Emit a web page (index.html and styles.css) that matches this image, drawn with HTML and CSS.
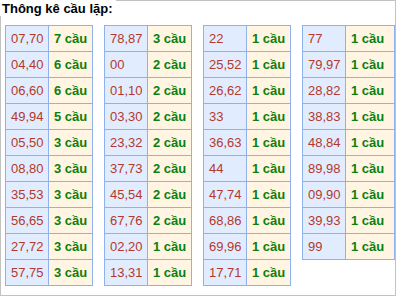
FILE: index.html
```html
<!DOCTYPE html>
<html>
<head>
<meta charset="utf-8">
<link rel="stylesheet" href="styles.css">
</head>
<body>
<div class="box">
  <div class="title"><span class="title-text">Thông kê cầu lặp:</span></div>
  <div class="tables">
    <div class="tbl">
      <div class="n">07,70</div><div class="c">7 cầu</div>
      <div class="n">04,40</div><div class="c">6 cầu</div>
      <div class="n">06,60</div><div class="c">6 cầu</div>
      <div class="n">49,94</div><div class="c">5 cầu</div>
      <div class="n">05,50</div><div class="c">3 cầu</div>
      <div class="n">08,80</div><div class="c">3 cầu</div>
      <div class="n">35,53</div><div class="c">3 cầu</div>
      <div class="n">56,65</div><div class="c">3 cầu</div>
      <div class="n">27,72</div><div class="c">3 cầu</div>
      <div class="n">57,75</div><div class="c">3 cầu</div>
    </div>
    <div class="tbl">
      <div class="n">78,87</div><div class="c">3 cầu</div>
      <div class="n">00</div><div class="c">2 cầu</div>
      <div class="n">01,10</div><div class="c">2 cầu</div>
      <div class="n">03,30</div><div class="c">2 cầu</div>
      <div class="n">23,32</div><div class="c">2 cầu</div>
      <div class="n">37,73</div><div class="c">2 cầu</div>
      <div class="n">45,54</div><div class="c">2 cầu</div>
      <div class="n">67,76</div><div class="c">2 cầu</div>
      <div class="n">02,20</div><div class="c">1 cầu</div>
      <div class="n">13,31</div><div class="c">1 cầu</div>
    </div>
    <div class="tbl">
      <div class="n">22</div><div class="c">1 cầu</div>
      <div class="n">25,52</div><div class="c">1 cầu</div>
      <div class="n">26,62</div><div class="c">1 cầu</div>
      <div class="n">33</div><div class="c">1 cầu</div>
      <div class="n">36,63</div><div class="c">1 cầu</div>
      <div class="n">44</div><div class="c">1 cầu</div>
      <div class="n">47,74</div><div class="c">1 cầu</div>
      <div class="n">68,86</div><div class="c">1 cầu</div>
      <div class="n">69,96</div><div class="c">1 cầu</div>
      <div class="n">17,71</div><div class="c">1 cầu</div>
    </div>
    <div class="tbl last">
      <div class="n">77</div><div class="c">1 cầu</div>
      <div class="n">79,97</div><div class="c">1 cầu</div>
      <div class="n">28,82</div><div class="c">1 cầu</div>
      <div class="n">38,83</div><div class="c">1 cầu</div>
      <div class="n">48,84</div><div class="c">1 cầu</div>
      <div class="n">89,98</div><div class="c">1 cầu</div>
      <div class="n">09,90</div><div class="c">1 cầu</div>
      <div class="n">39,93</div><div class="c">1 cầu</div>
      <div class="n">99</div><div class="c">1 cầu</div>
    </div>
  </div>
</div>
</body>
</html>
```
FILE: styles.css
```css
html, body {
  margin: 0;
  padding: 0;
  background: #ffffff;
}
.box {
  width: 396px;
  height: 296px;
  box-sizing: border-box;
  border: 1px solid #c2c2c2;
  font-family: "Liberation Sans", Arial, sans-serif;
  font-size: 13px;
}
.title {
  font-weight: bold;
  line-height: 15px;
  height: 24px;
  padding-left: 1px;
  color: #000000;
}
.title-text {
  background: #ffffff;
  margin-left: -2px;
  padding: 2px 3px 0 2px;
}
.tables {
  display: flex;
  align-items: flex-start;
  gap: 11px;
  padding-left: 4px;
}
.tbl {
  display: grid;
  grid-template-columns: 43px 1fr;
  width: 88px;
  box-sizing: border-box;
  border-left: 1px solid #8fb2ef;
  border-top: 1px solid #8fb2ef;
}
.tbl.last {
  flex: 1;
}
.n, .c {
  padding: 5px 0 5px 5px;
  line-height: 15px;
  border-right: 1px solid #8fb2ef;
  border-bottom: 1px solid #8fb2ef;
  white-space: nowrap;
}
.n {
  background: #e1edff;
  color: #b3392c;
}
.c {
  background: #fff5e2;
  color: #0c800c;
  font-weight: bold;
}
```
